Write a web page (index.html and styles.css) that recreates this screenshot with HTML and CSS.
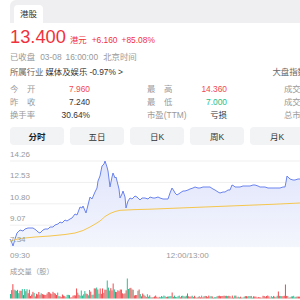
FILE: index.html
```html
<!DOCTYPE html>
<html>

<head>
    <meta charset="UTF-8">
    <title>港股 分时</title>
    <link rel="stylesheet" href="styles.css">
</head>

<body>
    <div class="tabs">
        <div class="tab">港股</div>
    </div>

    <div class="quote">
        <div class="price-row">
            <span class="price">13.400</span>
            <span class="unit">港元</span>
            <span class="chg">+6.160</span>
            <span class="chg">+85.08%</span>
        </div>
        <div class="meta">
            <span>已收盘</span>
            <span>03-08</span>
            <span>16:00:00</span>
            <span>北京时间</span>
        </div>
        <div class="industry">
            <span class="ind-label">所属行业</span>
            <span class="ind-name">媒体及娱乐</span>
            <span class="ind-name">-0.97%</span>
            <span class="ind-name">&gt;</span>
            <span class="index-link">大盘指数</span>
        </div>

        <div class="stats">
            <div class="stat"><span class="lbl just">今 开</span><span class="val up">7.960</span></div>
            <div class="stat"><span class="lbl just">最 高</span><span class="val up">14.360</span></div>
            <div class="stat"><span class="lbl">成交量</span><span class="val">--</span></div>

            <div class="stat"><span class="lbl just">昨 收</span><span class="val">7.240</span></div>
            <div class="stat"><span class="lbl just">最 低</span><span class="val down">7.000</span></div>
            <div class="stat"><span class="lbl">成交额</span><span class="val">--</span></div>

            <div class="stat"><span class="lbl">换手率</span><span class="val">30.64%</span></div>
            <div class="stat"><span class="lbl">市盈(TTM)</span><span class="val">亏损</span></div>
            <div class="stat"><span class="lbl">总市值</span><span class="val">--</span></div>
        </div>

        <div class="periods">
            <button class="period active">分时</button>
            <button class="period">五日</button>
            <button class="period">日K</button>
            <button class="period">周K</button>
            <button class="period">月K</button>
        </div>
    </div>

    <svg class="chart" width="300" height="156" viewBox="0 144 300 156">
        <defs>
            <linearGradient id="area" x1="0" y1="0" x2="0" y2="1">
                <stop offset="0" stop-color="#dfe4fb"/>
                <stop offset="1" stop-color="#f4f6fd"/>
            </linearGradient>
        </defs>

        <!-- grid -->
        <g class="grid">
            <line x1="10" y1="160" x2="300" y2="160"/>
            <line x1="10" y1="181.4" x2="300" y2="181.4"/>
            <line x1="10" y1="202.8" x2="300" y2="202.8"/>
            <line x1="10" y1="224.2" x2="300" y2="224.2"/>
            <line x1="10" y1="245.6" x2="300" y2="245.6"/>
        </g>

        <!-- price area + line -->
        <polygon id="area-fill" fill="url(#area)" points=""/>
        <polyline id="price-line" class="price-line" points=""/>
        <polyline class="avg-line" points="10,240 20,237.5 35,236 50,235 65,233.5 75,232 83,229.5 90,226 96,222.5 100,220 105,215.5 110,212.5 115,210.5 120,209.3 135,208.6 150,208.2 175,207.2 200,206.2 225,205.2 250,204.2 275,203.2 300,202"/>

        <!-- axis labels -->
        <g class="axis">
            <text x="10" y="155.8">14.26</text>
            <text x="10" y="177.3">12.53</text>
            <text x="10" y="198.6">10.80</text>
            <text x="10" y="220">9.07</text>
            <text x="10" y="240.6">7.34</text>
            <text x="10" y="257">09:30</text>
            <text x="187.5" y="257" text-anchor="middle">12:00/13:00</text>
        </g>
        <text class="vol-title" x="10" y="272.8">成交量（股）</text>

        <g id="vol"></g>
    </svg>

    <script src="script.js"></script>
</body>

</html>
```

FILE: styles.css
```css
body {
    margin: 0;
    width: 300px;
    height: 300px;
    overflow: hidden;
    background: #fff;
    font-family: "Liberation Sans", "Noto Sans CJK SC", sans-serif;
    font-size: 8.4px;
    color: #333;
}

.tabs {
    margin-left: 10px;
    height: 23px;
    background-color: #efeff1;
    border-top-left-radius: 6px;
    padding-left: 4px;
    display: flex;
    align-items: flex-end;
}

.tab {
    height: 18px;
    line-height: 18px;
    padding: 0 6px;
    background-color: #fff;
    border-radius: 4px 4px 0 0;
    font-size: 8.5px;
    color: #333;
}

.quote {
    padding-left: 10px;
    width: 296px;
}

.price-row {
    margin-top: 4px;
    height: 20px;
    display: flex;
    align-items: baseline;
    gap: 4px;
    color: #f0323c;
}

.price {
    font-size: 18.3px;
    line-height: 20px;
}

.unit {
    margin-right: 1px;
}

.meta {
    margin-top: 3px;
    line-height: 14px;
    color: #999;
    display: flex;
    gap: 5px;
}

.meta span:nth-child(2) {
    margin-right: -1px;
}

.industry {
    line-height: 14px;
    margin-top: 1px;
    display: flex;
    gap: 2px;
}

.ind-label {
    color: #666;
}

.ind-name {
    color: #333;
}

.index-link {
    margin-left: auto;
    color: #666;
}

.stats {
    margin-top: 4px;
    display: grid;
    grid-template-columns: 80px 80px 80px;
    column-gap: 57px;
    line-height: 13px;
}

.stat {
    display: flex;
    justify-content: space-between;
    white-space: nowrap;
}

.lbl {
    color: #999;
}

.lbl.just {
    width: 25.5px;
    text-align: justify;
    text-align-last: justify;
}

.val {
    color: #333;
}

.val.up {
    color: #f04a52;
}

.val.down {
    color: #27c08a;
}

.periods {
    margin-top: 5px;
    display: flex;
    gap: 6px;
}

.period {
    flex: none;
    width: 54px;
    height: 18px;
    padding: 0;
    border: none;
    border-radius: 4px;
    background-color: #f2f3f5;
    font-family: inherit;
    font-size: 8.5px;
    color: #333;
}

.period.active {
    font-weight: bold;
    color: #222;
}

.chart {
    display: block;
}

.grid line {
    stroke: #efefef;
    stroke-width: 1;
}

.price-line {
    fill: none;
    stroke: #6a83ee;
    stroke-width: 1;
    stroke-linejoin: round;
}

.avg-line {
    fill: none;
    stroke: #f5c64e;
    stroke-width: 1;
}

.axis text {
    font-size: 8px;
    fill: #999;
}

.vol-title {
    font-size: 7.3px;
    fill: #999;
}

.bar-up {
    fill: #f24a4f;
}

.bar-down {
    fill: #2dbf93;
}
```

FILE: script.js
```javascript
// price trace (page coordinates), 09:30 at x=10
const pricePts = [
    [10, 238], [12, 242], [13, 245], [15, 238], [17, 232], [20, 229], [23, 230], [25, 228],
    [28, 227], [30, 227], [33, 227], [36, 229], [38, 231], [40, 232], [43, 229], [45, 228],
    [48, 228], [50, 226], [53, 226], [55, 224], [58, 223], [60, 221], [62, 222], [65, 219],
    [67, 220], [70, 218], [72, 217], [75, 213], [77, 214], [80, 206], [82, 207], [83, 205],
    [86, 212], [88, 204], [90, 196], [92, 198], [95, 191], [97, 187], [98, 180], [100, 175],
    [102, 165], [104, 163], [105, 160], [107, 166], [108, 170], [110, 186], [112, 176],
    [113, 172], [115, 177], [116, 176], [117, 180], [119, 188], [120, 197], [122, 193],
    [123, 190], [125, 196], [126, 207], [128, 200], [130, 197], [132, 198], [135, 195],
    [137, 196], [140, 199], [142, 197], [145, 197], [148, 198], [150, 196], [153, 197],
    [155, 197], [158, 196], [160, 197], [163, 198], [165, 198], [168, 198], [170, 192],
    [172, 187], [174, 190], [175, 192], [177, 194], [180, 192], [183, 190], [185, 190],
    [188, 189], [190, 188], [193, 187], [195, 186], [198, 187], [200, 187], [203, 186],
    [205, 186], [208, 186], [210, 186], [213, 188], [215, 189], [218, 191], [220, 192],
    [223, 191], [225, 191], [228, 189], [230, 189], [232, 184], [234, 185], [235, 186],
    [238, 186], [240, 186], [243, 185], [245, 185], [248, 185], [250, 185], [253, 184],
    [255, 184], [258, 185], [260, 186], [263, 186], [265, 186], [268, 187], [270, 187],
    [273, 187], [275, 187], [278, 187], [280, 187], [283, 186], [285, 186], [286, 181],
    [287, 175], [289, 177], [290, 178], [293, 179], [295, 179], [298, 178], [300, 178]
];

const line = pricePts.map(p => p.join(',')).join(' ');
document.getElementById('price-line').setAttribute('points', line);
document.getElementById('area-fill').setAttribute('points', line + ' 300,246 10,246');

// volume bars, one per minute
let seed = 7;
function rand() {
    seed = (seed * 16807) % 2147483647;
    return (seed - 1) / 2147483646;
}

function envelope(x) {
    if (x < 14) return 18;
    if (x < 30) return 10;
    if (x < 60) return 7;
    if (x < 75) return 4;
    if (x < 140) return 11;
    if (x < 150) return 5;
    return 3;
}

const spikes = { 92: 13, 107: 18, 113: 15, 127: 20, 139: 9, 172: 6, 187: 5, 278: 7, 285: 14, 289: 4 };

const vol = document.getElementById('vol');
const base = 297.5;
for (let i = 0; i < 250; i++) {
    const x = 10 + i * 1.18;
    if (x > 300) break;
    let h = envelope(x) * (0.25 + 0.75 * rand());
    const key = Math.round(x);
    if (spikes[key]) h = spikes[key];
    if (h < 0.6) h = 0.6;
    const rect = document.createElementNS('http://www.w3.org/2000/svg', 'rect');
    rect.setAttribute('x', x.toFixed(2));
    rect.setAttribute('y', (base - h).toFixed(2));
    rect.setAttribute('width', '1');
    rect.setAttribute('height', h.toFixed(2));
    const upBias = x < 140 ? 0.62 : 0.55;
    let up = rand() < upBias;
    if (key === 107 || key === 127) up = false;
    if (key === 285 || key === 278 || key === 172) up = true;
    rect.setAttribute('class', up ? 'bar-up' : 'bar-down');
    vol.appendChild(rect);
}
```
